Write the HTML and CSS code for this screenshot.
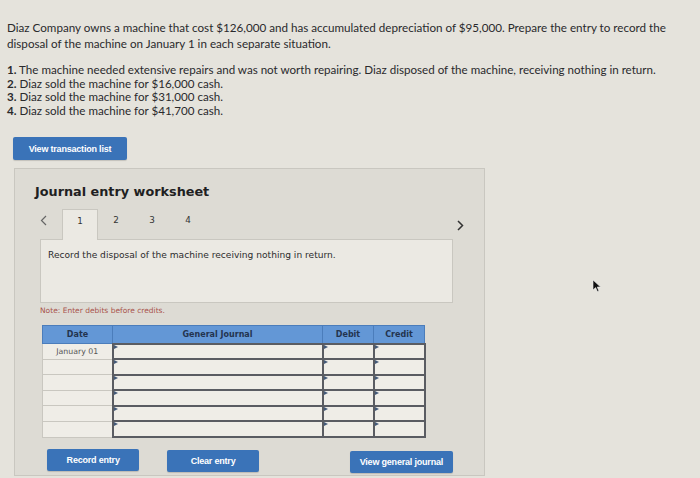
FILE: index.html
```html
<!DOCTYPE html>
<html>
<head>
<meta charset="utf-8">
<link rel="stylesheet" href="styles.css">
</head>
<body>
<div class="page">
  <p class="intro">Diaz Company owns a machine that cost $126,000 and has accumulated depreciation of $95,000. Prepare the entry to record the disposal of the machine on January 1 in each separate situation.</p>
  <ol class="cases">
    <li><b>1.</b> The machine needed extensive repairs and was not worth repairing. Diaz disposed of the machine, receiving nothing in return.</li>
    <li><b>2.</b> Diaz sold the machine for $16,000 cash.</li>
    <li><b>3.</b> Diaz sold the machine for $31,000 cash.</li>
    <li><b>4.</b> Diaz sold the machine for $41,700 cash.</li>
  </ol>
  <button class="btn btn-list">View transaction list</button>

  <section class="worksheet">
    <h2 class="ws-title">Journal entry worksheet</h2>
    <div class="tabs">
      <span class="nav prev"><svg width="7" height="11" viewBox="0 0 7 11"><path d="M6 1 L1.5 5.5 L6 10" fill="none" stroke="#666" stroke-width="1.2"/></svg></span>
      <span class="tab active">1</span>
      <span class="tab">2</span>
      <span class="tab">3</span>
      <span class="tab">4</span>
      <span class="nav next"><svg width="7" height="11" viewBox="0 0 7 11"><path d="M1 1 L5.5 5.5 L1 10" fill="none" stroke="#333" stroke-width="1.5"/></svg></span>
    </div>
    <div class="prompt">Record the disposal of the machine receiving nothing in return.</div>
    <p class="note">Note: Enter debits before credits.</p>
    <table class="journal">
      <thead>
        <tr><th class="c-date">Date</th><th class="c-gj">General Journal</th><th class="c-num">Debit</th><th class="c-num">Credit</th></tr>
      </thead>
      <tbody>
        <tr><td class="d">January 01</td><td class="in"></td><td class="in"></td><td class="in"></td></tr>
        <tr><td class="d"></td><td class="in"></td><td class="in"></td><td class="in"></td></tr>
        <tr><td class="d"></td><td class="in"></td><td class="in"></td><td class="in"></td></tr>
        <tr><td class="d"></td><td class="in"></td><td class="in"></td><td class="in"></td></tr>
        <tr><td class="d"></td><td class="in"></td><td class="in"></td><td class="in"></td></tr>
        <tr><td class="d"></td><td class="in"></td><td class="in"></td><td class="in"></td></tr>
      </tbody>
    </table>
    <div class="actions">
      <button class="btn btn-record">Record entry</button>
      <button class="btn btn-clear">Clear entry</button>
      <button class="btn btn-view">View general journal</button>
    </div>
  </section>
  <svg class="cursor" width="10" height="14" viewBox="0 0 10 14"><path d="M1 1 L1 11 L3.6 8.6 L5.4 12.6 L6.9 11.9 L5.2 8 L8.6 8 Z" fill="#111" stroke="#eee" stroke-width="0.6"/></svg>
</div>
</body>
</html>
```
FILE: styles.css
```css
* { box-sizing: border-box; }
html, body { margin: 0; padding: 0; }
body {
  width: 700px;
  height: 478px;
  overflow: hidden;
  background: #e5e3dc;
  font-family: "Lato", "Liberation Sans", sans-serif;
  color: #2a2a2c;
}
.page { position: relative; padding: 20px 0 0 7px; height: 478px; }
.intro {
  margin: 0;
  font-size: 11.65px;
  line-height: 15.5px;
  width: 680px;
}
.cases {
  list-style: none;
  margin: 12px 0 0 0;
  padding: 0;
  font-size: 11.6px;
  line-height: 13.5px;
}
.cases b { font-weight: 700; }
.btn {
  display: flex;
  align-items: center;
  justify-content: center;
  border: none;
  border-radius: 2px;
  background: #3a73b8;
  color: #fff;
  font-family: "Liberation Sans", sans-serif;
  font-weight: 700;
  font-size: 9px;
  letter-spacing: -0.2px;
  padding: 0;
  box-shadow: 0 1px 1px rgba(0,0,0,0.15);
}
.btn-list { width: 114px; height: 23px; margin: 20px 0 0 6px; }
.worksheet {
  margin: 8px 0 0 7px;
  width: 471px;
  height: 308px;
  background: #dddbd4;
  border: 1px solid #c9c7c0;
  padding: 15px 31px 0 25px;
}
.ws-title {
  margin: 0 0 9px -5px;
  font-family: "DejaVu Sans", sans-serif;
  font-weight: 700;
  font-size: 12.8px;
  line-height: 16px;
  color: #1f1f22;
}
.tabs {
  display: flex;
  align-items: stretch;
  height: 30px;
  margin-right: -11px;
  font-family: "DejaVu Sans", sans-serif;
  font-size: 8.8px;
  color: #333;
}
.nav { display: flex; align-items: center; }
.prev { width: 7px; padding-bottom: 8px; }
.prev + .tab { margin-left: 15px; }
.next { margin-left: auto; padding-top: 2px; }
.tab {
  width: 36px;
  display: flex;
  justify-content: center;
  padding-top: 6px;
}
.tab.active {
  background: #ebe9e3;
  border: 1px solid #c9c7c0;
  border-bottom: none;
  margin-bottom: -1px;
  position: relative;
  z-index: 1;
}
.prompt {
  height: 64px;
  background: #ebe9e3;
  border: 1px solid #c9c7c0;
  padding: 10px 7px 0;
  font-family: "DejaVu Sans", sans-serif;
  font-size: 9.1px;
  color: #2b2b2d;
}
.note {
  margin: 3px 0 0 0;
  font-family: "DejaVu Sans", sans-serif;
  font-size: 7.5px;
  line-height: 10px;
  color: #a9544c;
}
.journal {
  margin: 9px 0 0 2px;
  border-collapse: collapse;
  table-layout: fixed;
  width: 382px;
}
.journal th {
  height: 18px;
  background: #6397d6;
  border: 1px solid #4b7dbb;
  font-family: "DejaVu Sans", sans-serif;
  font-weight: 700;
  font-size: 8px;
  color: #23344f;
  padding: 0;
}
.c-date { width: 70px; }
.c-gj { width: 210px; }
.c-num { width: 51px; }
.journal td {
  height: 15.6px;
  padding: 0;
}
.journal td.d {
  background: #efede7;
  border: 1px solid #c9c7c0;
  font-family: "DejaVu Sans", sans-serif;
  font-size: 7.8px;
  color: #555;
  text-align: center;
}
.journal td.in {
  background: #efede7;
  border: 2px solid #5a5c62;
  position: relative;
}
.journal td.in::before {
  content: "";
  position: absolute;
  left: 0;
  top: 0;
  border-left: 4px solid #445a78;
  border-top: 2px solid transparent;
  border-bottom: 2px solid transparent;
}
.actions {
  display: flex;
  margin-top: 11px;
  padding-left: 7px;
}
.btn-record { width: 93px; height: 22px; }
.btn-clear { width: 92px; height: 22px; margin-left: 28px; margin-top: 1px; }
.btn-view { width: 104px; height: 22px; margin-left: 91px; margin-top: 2px; }
.cursor { position: absolute; left: 592px; top: 279px; }
```
